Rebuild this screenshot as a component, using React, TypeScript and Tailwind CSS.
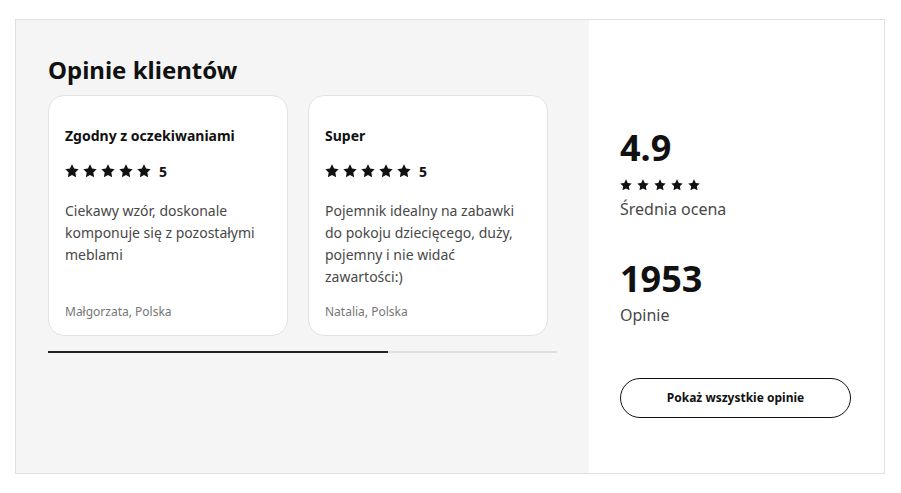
import React from 'react';

type Review = {
  title: string;
  rating: number;
  body: string;
  author: string;
};

const reviews: Review[] = [
  {
    title: 'Zgodny z oczekiwaniami',
    rating: 5,
    body: 'Ciekawy wzór, doskonale komponuje się z pozostałymi meblami',
    author: 'Małgorzata, Polska',
  },
  {
    title: 'Super',
    rating: 5,
    body: 'Pojemnik idealny na zabawki do pokoju dziecięcego, duży, pojemny i nie widać zawartości:)',
    author: 'Natalia, Polska',
  },
];

function Star({ size }: { size: number }) {
  return (
    <svg width={size} height={size} viewBox="2 2 20 20" fill="#111111" aria-hidden="true">
      <path d="M12 2.5l2.95 6.1 6.55.95-4.75 4.65 1.12 6.55L12 17.65l-5.87 3.1 1.12-6.55L2.5 9.55l6.55-.95L12 2.5z" />
    </svg>
  );
}

function Stars({ size, gap }: { size: number; gap: string }) {
  return (
    <div className={`flex items-center ${gap}`}>
      {[0, 1, 2, 3, 4].map((i) => (
        <Star key={i} size={size} />
      ))}
    </div>
  );
}

function ReviewCard({ review }: { review: Review }) {
  return (
    <div className="w-[240px] h-[241px] shrink-0 flex flex-col rounded-2xl border border-[#e2e2e2] bg-white px-4 pt-[30px] pb-[14px]">
      <h3 className="text-[14px] leading-[20px] font-bold text-[#111111]">{review.title}</h3>
      <div className="mt-[15px] flex h-5 items-center gap-[8px]">
        <Stars size={14} gap="gap-[4px]" />
        <span className="text-[14px] font-bold text-[#111111]">{review.rating}</span>
      </div>
      <p className="mt-[19px] text-[14px] leading-[22px] text-[#484848]">{review.body}</p>
      <p className="mt-auto text-[12px] leading-[18px] text-[#767676]">{review.author}</p>
    </div>
  );
}

export default function App() {
  return (
    <div className="min-h-screen bg-white pt-[19px] pl-[15px]" style={{ fontFamily: '"Noto Sans", sans-serif' }}>
      <div className="flex w-[870px] h-[455px] border border-[#e0e0e0]">
        {/* reviews carousel */}
        <section className="w-[573px] bg-[#f5f5f5] px-8 pt-[34px]">
          <h2 className="text-[24px] leading-[32px] font-bold text-[#111111]">Opinie klientów</h2>
          <div className="mt-[9px] flex gap-[20px] overflow-hidden">
            {reviews.map((r) => (
              <ReviewCard key={r.title} review={r} />
            ))}
          </div>
          <div className="mt-[15px] h-[2px] w-full bg-[#dfdfdf]">
            <div className="h-full w-[340px] bg-[#222222]" />
          </div>
        </section>

        {/* summary */}
        <aside className="flex-1 bg-white pl-[31px] pr-8 pt-[108px]">
          <div className="text-[36px] leading-[40px] font-bold text-[#111111]">4.9</div>
          <div className="mt-[11px]">
            <Stars size={12} gap="gap-[5px]" />
          </div>
          <div className="mt-[6px] text-[16px] leading-[24px] text-[#484848]">Średnia ocena</div>
          <div className="mt-[38px] text-[36px] leading-[40px] font-bold text-[#111111]">1953</div>
          <div className="mt-[4px] text-[16px] leading-[24px] text-[#484848]">Opinie</div>
          <button className="mt-[51px] flex h-10 w-[231px] items-center justify-center rounded-full border border-[#111111] bg-white text-[12px] font-bold text-[#111111]">
            Pokaż wszystkie opinie
          </button>
        </aside>
      </div>
    </div>
  );
}
